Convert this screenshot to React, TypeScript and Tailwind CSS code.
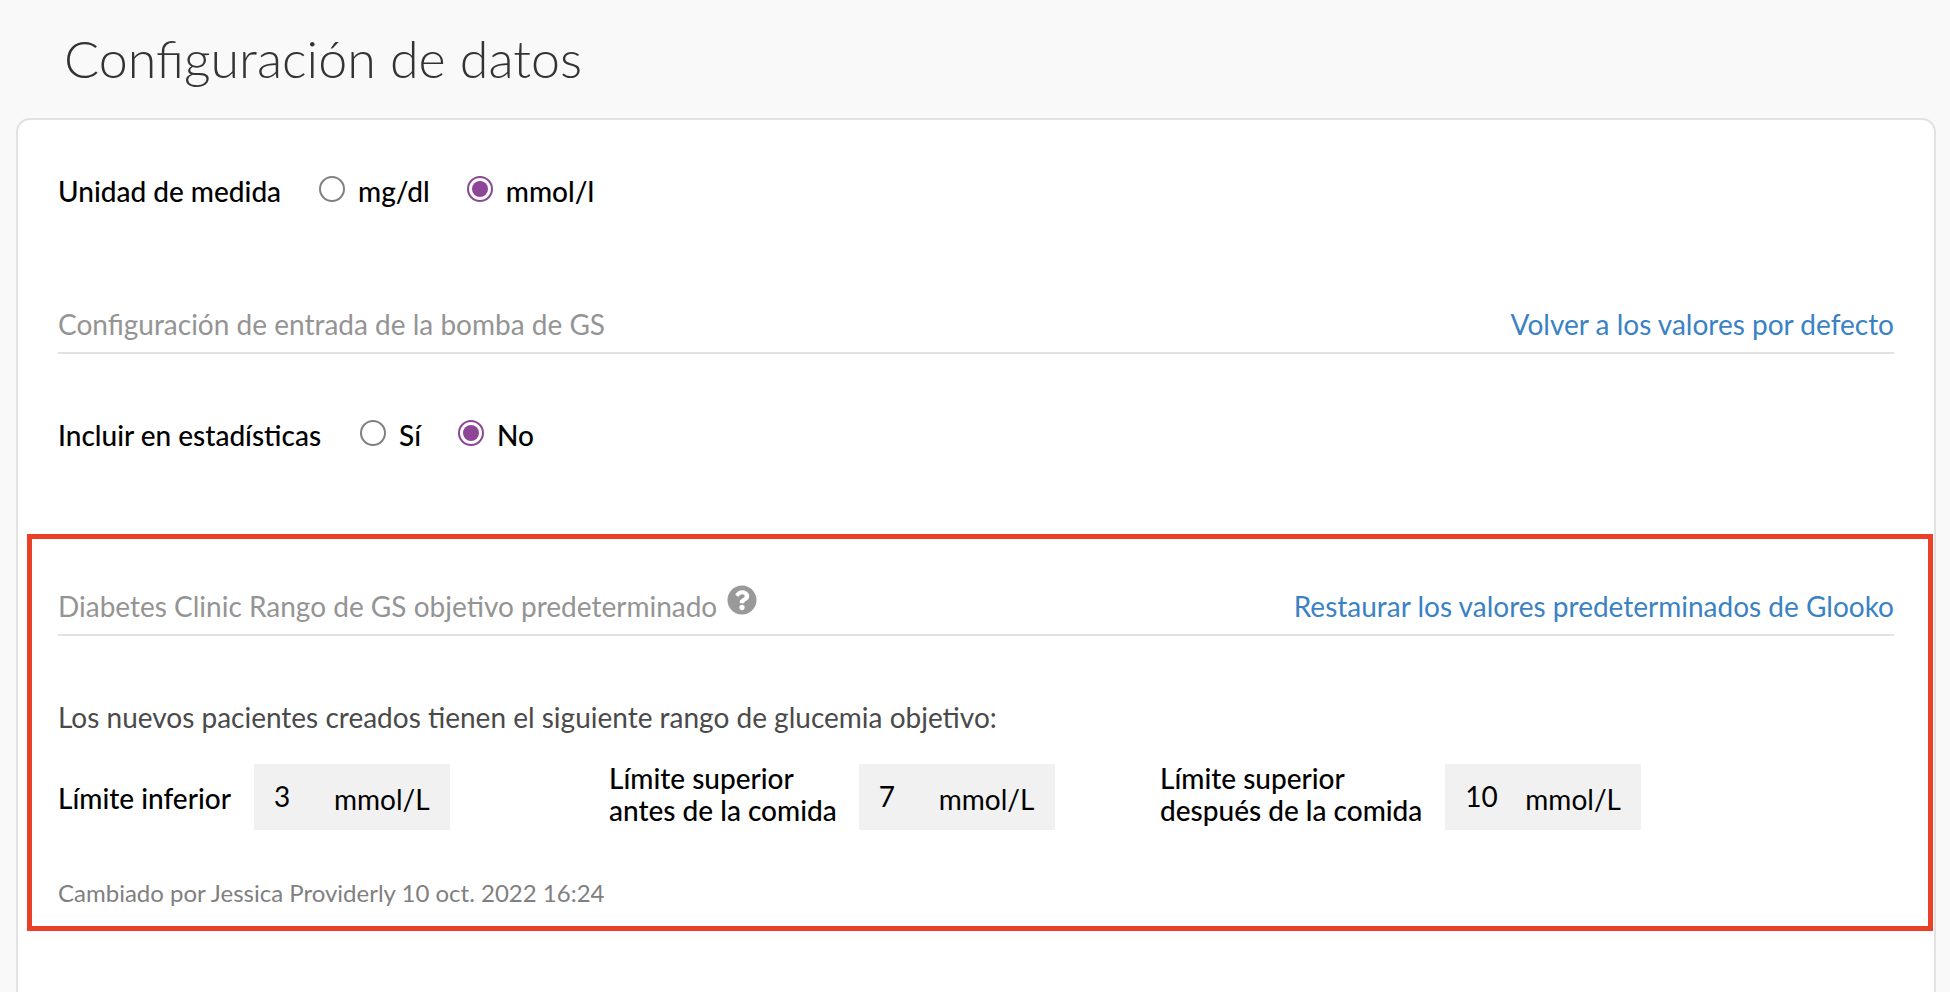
import { FaQuestionCircle } from "react-icons/fa";

const Radio = ({ label, checked }: { label: string; checked?: boolean }) => (
  <label className="flex items-center gap-[13px]">
    <span
      className={`flex h-[26px] w-[26px] -translate-y-[2px] items-center justify-center rounded-full border-2 ${
        checked ? "border-[#8e4598]" : "border-[#808080]"
      }`}
    >
      {checked && <span className="h-[16px] w-[16px] rounded-full bg-[#8e4598]" />}
    </span>
    <span className="text-[28px] font-medium leading-[34px] text-black">{label}</span>
  </label>
);

const SectionHeader = ({
  title,
  link,
  help,
}: {
  title: string;
  link: string;
  help?: boolean;
}) => (
  <div className="flex items-end justify-between border-b-2 border-[#e2e2e2] pb-[11px]">
    <div className="flex items-end gap-[10px]">
      <span className="text-[28px] leading-[34px] text-[#949494]">{title}</span>
      {help && <FaQuestionCircle className="mb-[8px] text-[30px] text-[#999999]" />}
    </div>
    <a className="text-[28px] leading-[34px] text-[#3a82c4]">{link}</a>
  </div>
);

const LimitField = ({
  label,
  value,
  className,
  labelClassName,
}: {
  label: React.ReactNode;
  value: string;
  className: string;
  labelClassName: string;
}) => (
  <div className={`flex items-center ${className}`}>
    <span className={`text-[28px] font-medium leading-[32px] text-black ${labelClassName}`}>{label}</span>
    <div className="flex h-[66px] w-[196px] items-center bg-[#f1f1f1] text-[28px] text-black">
      <span className="w-[79px] -translate-y-[1px] pl-[20px]">{value}</span>
      <span className="ml-[1px] translate-y-[2px]">mmol/L</span>
    </div>
  </div>
);

export default function App() {
  return (
    <div className="h-screen overflow-hidden bg-[#f9f9f9] pl-[16px] pr-[14px] font-['Lato',sans-serif]">
      <h1 className="pl-[48px] pt-[24px] pb-[25px] text-[52px] font-light leading-[69px] text-[#333333]">
        Configuración de datos
      </h1>
      <div className="min-h-[900px] rounded-t-[14px] border-2 border-[#e2e2e2] bg-white pt-[54px]">
        <div className="flex items-center pl-[40px]">
          <span className="mr-[38px] text-[28px] font-medium leading-[34px] text-black">Unidad de medida</span>
          <div className="flex gap-[37px]">
            <Radio label="mg/dl" />
            <Radio label="mmol/l" checked />
          </div>
        </div>

        <div className="ml-[40px] mr-[40px] mt-[99px]">
          <SectionHeader
            title="Configuración de entrada de la bomba de GS"
            link="Volver a los valores por defecto"
          />
        </div>

        <div className="mt-[64px] flex items-center pl-[40px]">
          <span className="mr-[39px] text-[28px] font-medium leading-[34px] text-black">Incluir en estadísticas</span>
          <div className="flex gap-[37px]">
            <Radio label="Sí" />
            <Radio label="No" checked />
          </div>
        </div>

        <section className="ml-[9px] mr-[1px] mt-[82px] h-[397px] border-[5px] border-[#ea4027] pl-[26px] pr-[34px] pt-[46px]">
          <SectionHeader
            title="Diabetes Clinic Rango de GS objetivo predeterminado"
            link="Restaurar los valores predeterminados de Glooko"
            help
          />
          <p className="mt-[65px] text-[28px] leading-[32px] text-[#4a4a4a]">
            Los nuevos pacientes creados tienen el siguiente rango de glucemia objetivo:
          </p>
          <div className="mt-[31px] flex">
            <LimitField
              className="w-[551px] gap-[23px]"
              labelClassName="translate-y-[1px]"
              label="Límite inferior"
              value="3"
            />
            <LimitField
              className="w-[551px] gap-[22px]"
              labelClassName="-translate-y-[3px]"
              label={<>Límite superior<br />antes de la comida</>}
              value="7"
            />
            <LimitField
              className="gap-[23px]"
              labelClassName="-translate-y-[3px]"
              label={<>Límite superior<br />después de la comida</>}
              value="10"
            />
          </div>
          <p className="mt-[48px] text-[24px] leading-[30px] text-[#808080]">
            Cambiado por Jessica Providerly 10 oct. 2022 16:24
          </p>
        </section>
      </div>
    </div>
  );
}
